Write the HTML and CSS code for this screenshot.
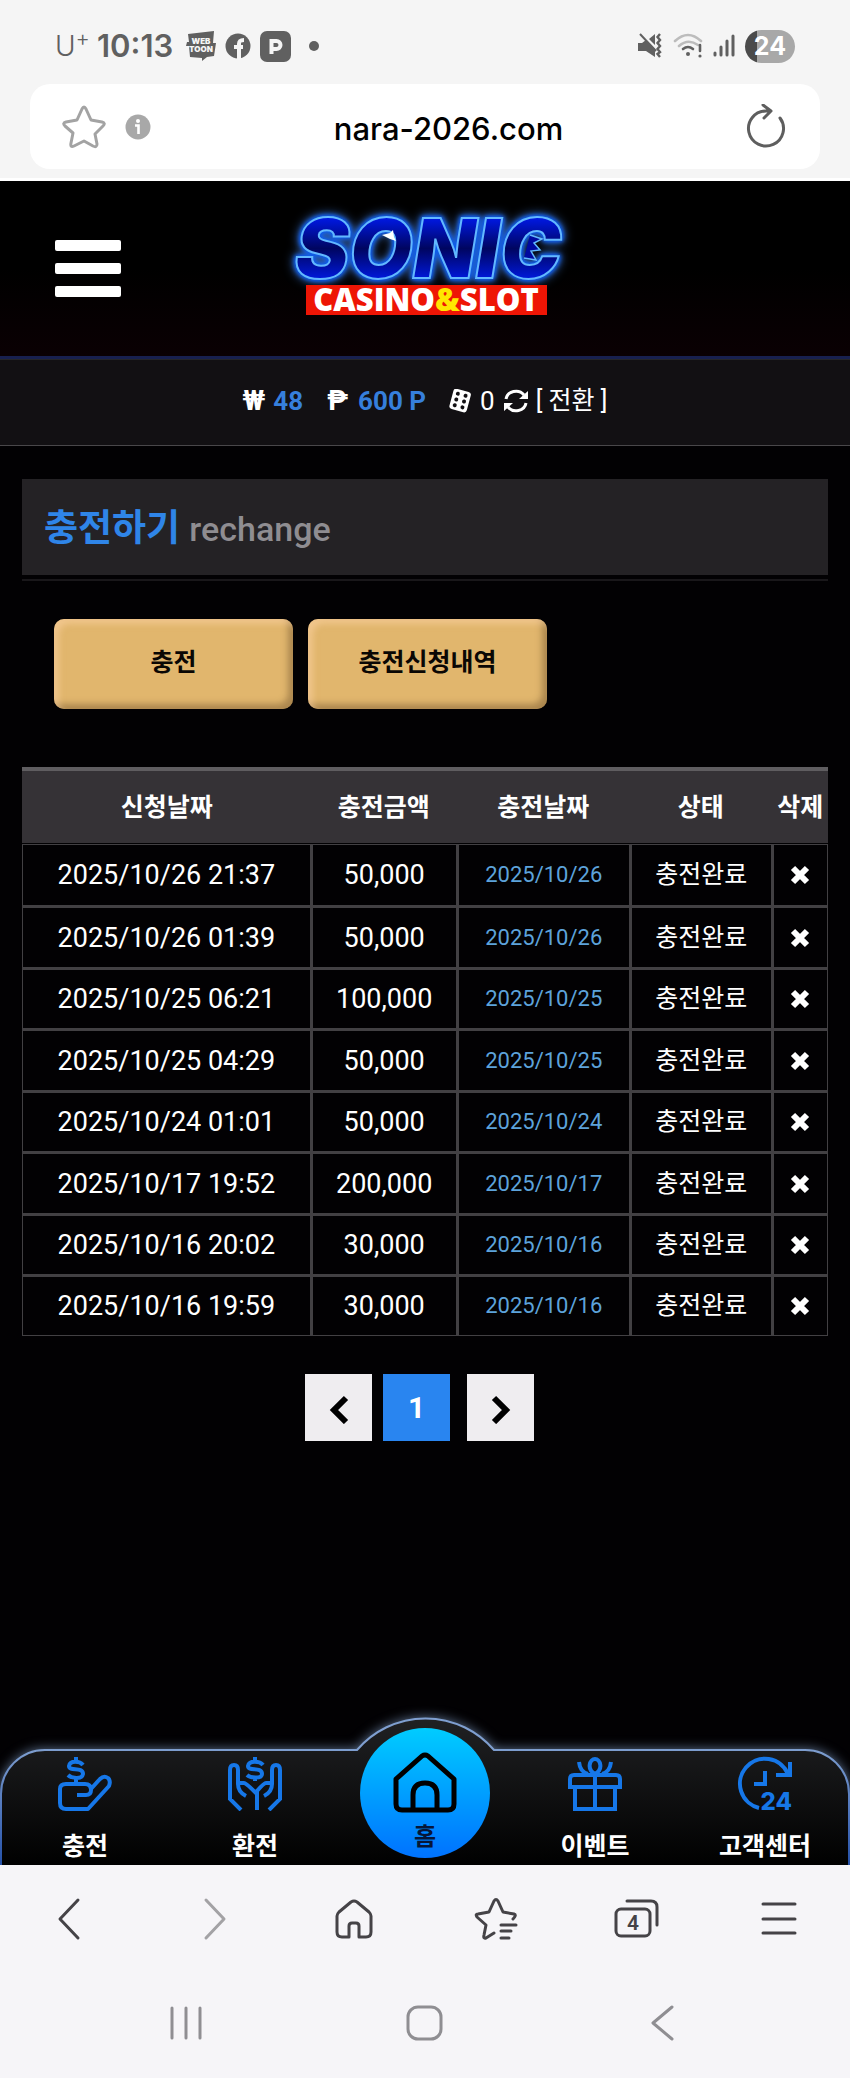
FILE: index.html
```html
<!DOCTYPE html>
<html lang="ko">
<head>
    <meta charset="UTF-8">
    <meta name="viewport" content="width=device-width, initial-scale=1.0">
    <title>충전하기</title>
    <link rel="stylesheet" href="styles.css">
</head>
<body>
    <div class="browser-top">
        <div class="status-bar">
            <span class="carrier">U<sup>+</sup></span>
            <span class="clock">10:13</span>
            <svg class="status-icon webtoon" width="30" height="30" viewBox="0 0 30 30">
                <path d="M2 3L28 0L27 12H30L28 25L21 26L16 30V27L4 26L3 15H0L1 11H3Z" fill="#606060"/>
                <text x="15" y="13" class="webtoon-text">WEB</text>
                <text x="15" y="21" class="webtoon-text">TOON</text>
            </svg>
            <svg class="status-icon" width="26" height="26" viewBox="0 0 26 26">
                <circle cx="13" cy="13" r="12.5" fill="#606060"/>
                <path d="M14 26V11C14 8 15 7 19 7M9 14H18" fill="none" stroke="#f5f5f5" stroke-width="4"/>
            </svg>
            <svg class="status-icon" width="31" height="31" viewBox="0 0 31 31">
                <rect width="31" height="31" rx="7" fill="#606060"/>
                <path d="M11.500 23V10H16.500A4 4 0 0 1 16.500 18H12" fill="none" stroke="#f5f5f5" stroke-width="4"/>
            </svg>
            <span class="dot"></span>
            <div class="status-right">
                <svg width="25" height="26" viewBox="0 0 25 26">
                    <path d="M0 10H4L8 7L17 16V24L8 18H0ZM11 6L17 1V12Z" fill="#606060"/>
                    <path d="M2 1L18 18" stroke="#606060" stroke-width="2"/>
                    <path d="M22 1L19.500 4L22 7L19.500 10L22 13L19.500 16L22 19L19.500 21L22 24" fill="none" stroke="#606060" stroke-width="2.400"/>
                </svg>
                <svg class="wifi" width="30" height="26" viewBox="0 0 30 26" fill="none" stroke-width="2.600" stroke-linecap="round">
                    <path d="M2 8Q15 -4 28 8M6 13Q15 5 25 12" stroke="#bcbcbc"/>
                    <path d="M10 16Q15 12 20 16M27 12V18" stroke="#606060"/>
                    <circle cx="15" cy="21" r="2" fill="#606060"/>
                    <circle cx="27" cy="23" r="1.600" fill="#606060"/>
                </svg>
                <svg width="22" height="24" viewBox="0 0 22 24" stroke="#606060" stroke-width="3" stroke-linecap="round">
                    <path d="M2 19V21M8 13V21M14 7V21M20 2V21"/>
                </svg>
                <span class="battery">24</span>
            </div>
        </div>
        <div class="address-bar">
            <button class="icon-btn" type="button" aria-label="즐겨찾기">
                <svg width="44" height="44" viewBox="0 0 44 44" fill="none" stroke="#a3a3a3" stroke-width="3" stroke-linejoin="round">
                    <path d="M20 4Q22 0 24 4L29 15L40 17Q44 18 41 21L33 29L35 39Q35 43 31 41L22 36L12 41Q8 43 9 38L11 28L3 21Q0 18 4 17L15 15Z"/>
                </svg>
            </button>
            <svg class="info" width="26" height="26" viewBox="0 0 26 26">
                <circle cx="13" cy="13" r="12.500" fill="#a8a8a8"/>
                <circle cx="13" cy="7" r="2" fill="#fff"/>
                <path d="M10 11.500H13.500V20" fill="none" stroke="#fff" stroke-width="2.600"/>
            </svg>
            <input class="url" type="text" value="nara-2026.com" aria-label="주소">
            <button class="icon-btn" type="button" aria-label="새로고침">
                <svg width="40" height="46" viewBox="0 0 40 46" fill="none" stroke="#5e5e5e" stroke-width="3" stroke-linecap="round" stroke-linejoin="round">
                    <path d="M34 14A17.500 17.500 0 1 1 20 7H24M17 1L25 7L18 14"/>
                </svg>
            </button>
        </div>
    </div>

    <header class="site-header">
        <button class="menu-btn" type="button" aria-label="메뉴">
            <span></span><span></span><span></span>
        </button>
        <a class="logo" href="#">
            <svg width="310" height="112" viewBox="0 0 310 112">
                <defs>
                    <linearGradient id="logo-fill" x1="0" y1="0" x2="0" y2="1">
                        <stop offset=".2" stop-color="#0018e0"/>
                        <stop offset=".5" stop-color="#000560"/>
                        <stop offset=".8" stop-color="#0018d8"/>
                    </linearGradient>
                </defs>
                <text class="logo-name" x="158" y="65">SONIC</text>
                <path d="M112 22L120 20L123 17L124 24L126 28L120 26Z" fill="#fff"/>
                <path d="M260 22L272 26L264 30L270 37L261 38L266 47L254 45" fill="#0009a0" stroke="#62b8ff" stroke-width="1.500"/>
                <rect x="36" y="72" width="241" height="30" fill="#ee1505"/>
                <text class="logo-sub" x="156" y="98">CASINO<tspan fill="#ffe600">&amp;</tspan>SLOT</text>
            </svg>
        </a>
    </header>

    <div class="wallet">
        <span class="sign">₩</span>
        <b class="money">48</b>
        <span class="sign peso">₱</span>
        <b class="money">600 P</b>
        <svg class="dice" width="24" height="24" viewBox="0 0 24 24">
            <g transform="rotate(15 12 12)">
                <rect x="3" y="1" width="18" height="21" rx="3" fill="#fff"/>
                <g fill="#121013">
                    <circle cx="8" cy="5.500" r="2"/><circle cx="16" cy="5.500" r="2"/>
                    <circle cx="8" cy="11.500" r="2"/><circle cx="16" cy="11.500" r="2"/>
                    <circle cx="8" cy="17.500" r="2"/><circle cx="16" cy="17.500" r="2"/>
                </g>
            </g>
        </svg>
        <span class="count">0</span>
        <button class="exchange" type="button">
            <svg width="24" height="24" viewBox="0 0 24 24">
                <path d="M2 10A10 9 0 0 1 20 6M22 14A10 9 0 0 1 4 18" fill="none" stroke="#fff" stroke-width="3"/>
                <path d="M24 2V10H15ZM0 22V14H9Z" fill="#fff"/>
            </svg>
            [ 전환 ]
        </button>
    </div>

    <main class="content">
        <h1 class="page-title">충전하기 <small>rechange</small></h1>
        <div class="tabs">
            <button type="button">충전</button>
            <button type="button">충전신청내역</button>
        </div>

        <table class="history">
            <colgroup>
                <col class="col-applied"><col class="col-amount"><col class="col-date"><col class="col-state"><col class="col-delete">
            </colgroup>
            <thead>
                <tr><th>신청날짜</th><th>충전금액</th><th>충전날짜</th><th>상태</th><th>삭제</th></tr>
            </thead>
            <tbody id="history-rows"></tbody>
        </table>

        <nav class="paging">
            <button type="button" aria-label="이전">
                <svg width="20" height="32" viewBox="0 0 20 32"><path d="M17 6L5 18L17 30" fill="none" stroke="#000" stroke-width="6"/></svg>
            </button>
            <button class="current" type="button">1</button>
            <button class="next" type="button" aria-label="다음">
                <svg width="20" height="32" viewBox="0 0 20 32"><path d="M3 6L15 18L3 30" fill="none" stroke="#000" stroke-width="6"/></svg>
            </button>
        </nav>
    </main>

    <nav class="bottom-nav">
        <svg class="nav-shape" viewBox="0 0 850 160" preserveAspectRatio="none">
            <defs>
                <linearGradient id="nav-fill" x1="0" y1="0" x2="0" y2="1">
                    <stop offset="0" stop-color="#202123"/>
                    <stop offset="1" stop-color="#000"/>
                </linearGradient>
                <linearGradient id="nav-line" x1="0" y1="0" x2="0" y2="1">
                    <stop offset=".2" stop-color="#7f9fd0"/>
                    <stop offset="1" stop-color="#2450a8"/>
                </linearGradient>
            </defs>
            <path class="nav-glow" d="M1 162V89A44 44 0 0 1 45 45H357A90 90 0 0 1 494 45H805A44 44 0 0 1 849 89V162Z" fill="url(#nav-fill)" stroke="url(#nav-line)" stroke-width="2"/>
        </svg>
        <a href="#">
            <svg width="54" height="54" viewBox="0 0 54 54" fill="none" stroke="#1677e8" stroke-width="4">
                <path d="M25 8C22 4 12 3 11 9C11 15 25 9 25 17C24 23 13 21 10 18M18 0V5M18 21V27"/>
                <path d="M19 38H28Q33 38 33 33Q33 27 27 27H8Q2 27 2 32V46Q2 52 8 52H30L51 29Q53 24 50 21Q46 18 42 22L32 33" stroke-linejoin="round"/>
            </svg>
            <span>충전</span>
        </a>
        <a href="#">
            <svg width="54" height="54" viewBox="0 0 54 54" fill="none" stroke="#1677e8" stroke-width="4">
                <path d="M35 8C32 4 21 3 20 9C20 15 34 9 34 17C34 22 22 21 19 18M27 0V5M27 20V24"/>
                <path d="M13 53L2 42V13Q2 8 6 8Q10 8 10 13V27Q10 35 18 39M11 26H16Q18 26 29 37M43 26H38Q36 26 29 34V53M36 39Q44 35 44 27V13Q44 8 48 8Q52 8 52 13V42L41 53"/>
            </svg>
            <span>환전</span>
        </a>
        <a class="home" href="#">
            <svg width="64" height="62" viewBox="0 0 64 62" fill="none" stroke="#000" stroke-width="5" stroke-linejoin="round">
                <path d="M20 58V43Q20 31 32 31Q44 31 44 43V58M9 58Q3 58 3 52V27L29 4Q32 2 35 4L61 27V52Q61 58 55 58Z"/>
            </svg>
            <span>홈</span>
        </a>
        <a href="#">
            <svg width="54" height="54" viewBox="0 0 54 54" fill="none" stroke="#1677e8" stroke-width="4">
                <path d="M7 31V52H47V31M2 30V22Q2 18 6 18H48Q52 18 52 22V30ZM27 18V52M27 17C18 12 22 2 27 2C32 2 36 12 27 17ZM11 5Q12 15 20 17M43 5Q42 15 34 17"/>
            </svg>
            <span>이벤트</span>
        </a>
        <a href="#">
            <svg class="support" width="54" height="54" viewBox="0 0 54 54" fill="none" stroke="#1677e8" stroke-width="4">
                <path d="M21 51A25 25 0 1 1 50 17M52 5V18H38M16 27H27V14"/>
                <text x="54" y="53" class="nav-24">24</text>
            </svg>
            <span>고객센터</span>
        </a>
    </nav>

    <div class="browser-bottom">
        <div class="browser-tools">
            <button type="button" aria-label="뒤로"><svg width="44" height="44" viewBox="0 0 44 44"><path d="M29 3L11 22L29 41"/></svg></button>
            <button class="disabled" type="button" aria-label="앞으로"><svg width="44" height="44" viewBox="0 0 44 44"><path d="M16 3L34 22L16 41"/></svg></button>
            <button type="button" aria-label="홈"><svg width="44" height="44" viewBox="0 0 44 44"><path d="M17 40V29Q17 26 20 26H24Q27 26 27 29V40H34Q39 40 39 35V19Q39 17 37 15L25 5Q22 3 19 5L7 15Q5 17 5 19V35Q5 40 10 40Z"/></svg></button>
            <button type="button" aria-label="북마크"><svg width="44" height="44" viewBox="0 0 44 44"><path d="M20 36L12 41Q9 42 10 38L12 28L3 20Q1 17 4 17L15 15L20 4Q22 1 24 4L29 15L40 17Q43 18 39 22M27 28H42M27 34H37M27 41H35"/></svg></button>
            <button type="button" aria-label="탭"><svg width="46" height="44" viewBox="0 0 46 44"><rect x="2" y="12" width="34" height="27" rx="5"/><path d="M13 4H37Q43 4 43 10V28"/><text x="19" y="33">4</text></svg></button>
            <button type="button" aria-label="메뉴"><svg width="44" height="44" viewBox="0 0 44 44"><path d="M6 7H38M6 22H38M6 36H38"/></svg></button>
        </div>
        <div class="system-tools">
            <button type="button" aria-label="최근 앱"><svg width="40" height="40" viewBox="0 0 40 40"><path d="M6 5V35M20 5V35M34 5V35"/></svg></button>
            <button type="button" aria-label="홈 화면"><svg width="40" height="40" viewBox="0 0 40 40"><rect x="3" y="4" width="33" height="32" rx="10"/></svg></button>
            <button type="button" aria-label="뒤로 가기"><svg width="40" height="40" viewBox="0 0 40 40"><path d="M28 4L9 20L28 36"/></svg></button>
        </div>
    </div>

    <script>
        const rows = [
            ['2025/10/26 21:37', '50,000', '2025/10/26'],
            ['2025/10/26 01:39', '50,000', '2025/10/26'],
            ['2025/10/25 06:21', '100,000', '2025/10/25'],
            ['2025/10/25 04:29', '50,000', '2025/10/25'],
            ['2025/10/24 01:01', '50,000', '2025/10/24'],
            ['2025/10/17 19:52', '200,000', '2025/10/17'],
            ['2025/10/16 20:02', '30,000', '2025/10/16'],
            ['2025/10/16 19:59', '30,000', '2025/10/16']
        ];
        const cross = '<svg width="20" height="20" viewBox="0 0 20 20"><path d="M3 3L17 17M17 3L3 17" stroke="#fff" stroke-width="6"/></svg>';

        document.getElementById('history-rows').innerHTML = rows.map(r =>
            '<tr><td>' + r[0] + '</td><td>' + r[1] + '</td><td class="date">' + r[2] + '</td>' +
            '<td class="state">충전완료</td><td><button class="delete" type="button" aria-label="삭제">' + cross + '</button></td></tr>'
        ).join('');
    </script>
</body>
</html>
```
FILE: styles.css
```css
* {
    box-sizing: border-box;
}
body {
    margin: 0;
    min-height: 100vh;
    display: flex;
    flex-direction: column;
    background-color: #020103;
    color: #fff;
    font-family: Roboto, "Noto Sans CJK KR", sans-serif;
    font-size: 25px;
}
button {
    padding: 0;
    border: none;
    background: none;
    color: inherit;
    font: inherit;
    cursor: pointer;
}
a {
    color: inherit;
    text-decoration: none;
}
svg {
    display: block;
    flex: none;
}

/* browser top */
.browser-top {
    padding: 0 30px 9px;
    background-color: #f5f5f5;
    border-bottom: 3px solid #fff;
}
.status-bar {
    display: flex;
    align-items: center;
    height: 84px;
    padding: 8px 25px 0;
    color: #606060;
}
.carrier {
    width: 42px;
    font-family: Inter, sans-serif;
    font-size: 28px;
    font-weight: 300;
    line-height: 32px;
}
.carrier sup {
    font-size: 22px;
    line-height: 0;
}
.clock {
    width: 89px;
    font-family: Inter, sans-serif;
    font-size: 31px;
    font-weight: 600;
    line-height: 32px;
}
.status-icon {
    margin-right: 9px;
}
.webtoon-text {
    font: 900 8px Inter, sans-serif;
    fill: #f5f5f5;
    text-anchor: middle;
}
.dot {
    width: 10px;
    height: 10px;
    margin-left: 9px;
    border-radius: 50%;
    background-color: #606060;
}
.status-right {
    display: flex;
    align-items: center;
    gap: 10px;
    margin-left: auto;
}
.battery {
    width: 50px;
    border-radius: 17px;
    background: linear-gradient(90deg, #4b4b4b 12px, #a8a8a8 12px);
    color: #fff;
    font-family: Inter, sans-serif;
    font-size: 25px;
    font-weight: 700;
    line-height: 33px;
    text-align: center;
}
.address-bar {
    display: flex;
    align-items: center;
    height: 85px;
    padding: 0 34px 0 32px;
    border-radius: 20px;
    background-color: #fff;
}
.info {
    margin-left: 19px;
}
.url {
    flex: 1;
    min-width: 0;
    padding: 3px 0 0;
    border: none;
    background: none;
    color: #000;
    font-family: Inter, sans-serif;
    font-size: 31px;
    font-weight: 500;
    text-align: center;
}

/* header */
.site-header {
    display: grid;
    grid-template-columns: 1fr auto 1fr;
    align-items: center;
    height: 178px;
    padding: 0 55px;
    background: linear-gradient(#000 50%, #0a0003);
    border-bottom: 3px solid #18204f;
}
.menu-btn {
    display: grid;
    gap: 12px;
    width: 66px;
}
.menu-btn span {
    height: 11px;
    border-radius: 2px;
    background-color: #fff;
}
.logo svg {
    overflow: visible;
}
.logo-name {
    font: italic 900 82px Inter, sans-serif;
    text-anchor: middle;
    fill: url(#logo-fill);
    stroke: #62b8ff;
    stroke-width: 2px;
    filter: drop-shadow(0 0 2px #0a5af0) drop-shadow(0 0 2px #0a5af0) drop-shadow(0 0 5px #3b6fc0);
}
.logo-sub {
    font: 800 31px "Open Sans", sans-serif;
    fill: #fff;
    text-anchor: middle;
}
.wallet {
    display: flex;
    align-items: center;
    justify-content: center;
    height: 87px;
    padding-bottom: 4px;
    background-color: #121013;
    border-top: 1px solid #26262a;
    border-bottom: 1px solid #49474a;
    font-size: 26px;
    line-height: 32px;
}
.sign {
    margin-right: 8px;
    font-size: 28px;
    font-weight: 700;
}
.peso {
    margin-left: 24px;
    margin-right: 10px;
}
.money {
    color: #367fdc;
}
.dice {
    margin-left: 22px;
}
.count {
    margin: 0 9px 0 8px;
}
.exchange {
    display: flex;
    align-items: center;
    gap: 8px;
    font-size: 25px;
    line-height: 32px;
}

/* content */
.content {
    flex: 1;
    padding: 33px 22px 0;
}
.page-title {
    margin: 0;
    height: 96px;
    padding-left: 22px;
    background-color: #242225;
    box-shadow: 0 4px 0 #020103, 0 6px 0 #19171a;
    color: #2f85e8;
    font-size: 37px;
    font-weight: 700;
    line-height: 100px;
}
.page-title small {
    color: #8f8d91;
    font-size: 34px;
    font-weight: 500;
}
.tabs {
    display: flex;
    gap: 15px;
    margin: 44px 32px 58px;
}
.tabs button {
    width: 239px;
    height: 90px;
    padding-bottom: 8px;
    border-radius: 10px;
    background-color: #e1b66d;
    box-shadow: inset 5px 5px 6px rgba(255, 214, 170, 0.5), inset -5px -5px 6px rgba(120, 90, 50, 0.5);
    color: #0a0704;
    font-weight: 700;
}
.history {
    width: 100%;
    table-layout: fixed;
    border-collapse: separate;
    border-spacing: 0;
    text-align: center;
}
.col-applied {
    width: 35.7%;
}
.col-amount {
    width: 18.1%;
}
.col-date {
    width: 21.5%;
}
.col-state {
    width: 17.6%;
}
.col-delete {
    width: 7.1%;
}
.history th {
    height: 77px;
    padding: 0 0 4px 2px;
    background-color: #353236;
    border-top: 4px solid #5f5d60;
    border-bottom: 1px solid #020103;
    font-weight: 700;
}
.history td {
    height: 61px;
    padding: 0;
    border-top: 3px solid #424043;
    border-left: 3px solid #424043;
    font-size: 27px;
    line-height: 32px;
}
.history tr:nth-child(even) td {
    height: 62px;
}
.history td:first-child {
    border-left-width: 1px;
}
.history td:last-child {
    border-right: 1px solid #424043;
}
.history tr:first-child td {
    border-top-width: 1px;
}
.history tr:last-child td {
    border-bottom: 1px solid #424043;
}
.history .date {
    color: #5da3db;
    font-size: 22px;
}
.history .state {
    font-size: 25px;
}
.delete {
    display: block;
    margin: 0 auto;
}
.paging {
    display: flex;
    justify-content: center;
    gap: 11px;
    margin: 38px 11px 0 0;
}
.paging button {
    display: flex;
    align-items: center;
    justify-content: center;
    width: 67px;
    height: 67px;
    background-color: #efedf0;
    font-size: 30px;
    font-weight: 700;
}
.paging .current {
    background-color: #2985f0;
}
.paging .next {
    margin-left: 6px;
}

/* bottom nav */
.bottom-nav {
    position: relative;
    display: grid;
    grid-template-columns: repeat(5, 1fr);
    align-items: end;
    height: 160px;
    font-weight: 700;
    line-height: 30px;
    overflow: hidden;
}
.nav-shape {
    position: absolute;
    inset: 0;
    width: 100%;
    height: 100%;
}
.nav-glow {
    filter: drop-shadow(0 0 6px rgba(150, 185, 230, 0.6));
}
.bottom-nav a {
    position: relative;
    display: flex;
    flex-direction: column;
    align-items: center;
    gap: 21px;
    padding-bottom: 3px;
}
.bottom-nav .home {
    justify-self: center;
    width: 130px;
    height: 130px;
    margin-bottom: 7px;
    padding-top: 24px;
    gap: 8px;
    border-radius: 50%;
    background: linear-gradient(#00ccff, #0072ff);
    color: #061638;
    font-size: 24px;
}
.support {
    overflow: visible;
}
.nav-24 {
    font: 800 24px Inter, sans-serif;
    fill: #1677e8;
    stroke: none;
    text-anchor: end;
}

/* browser bottom */
.browser-bottom {
    height: 213px;
    background-color: #f6f5f8;
}
.browser-tools,
.system-tools {
    display: grid;
    justify-items: center;
    align-items: center;
    height: 107px;
}
.browser-tools {
    grid-template-columns: repeat(6, 1fr);
}
.system-tools {
    grid-template-columns: repeat(3, 1fr);
    height: 102px;
    padding: 0 67px;
}
.browser-bottom svg {
    fill: none;
    stroke: #454347;
    stroke-width: 3px;
    stroke-linecap: round;
    stroke-linejoin: round;
}
.browser-bottom .disabled svg {
    stroke: #a3a2a5;
}
.browser-bottom .system-tools svg {
    stroke: #8f8e92;
}
.browser-bottom text {
    font: 600 21px Roboto, sans-serif;
    fill: #454347;
    stroke: none;
    text-anchor: middle;
}
```
